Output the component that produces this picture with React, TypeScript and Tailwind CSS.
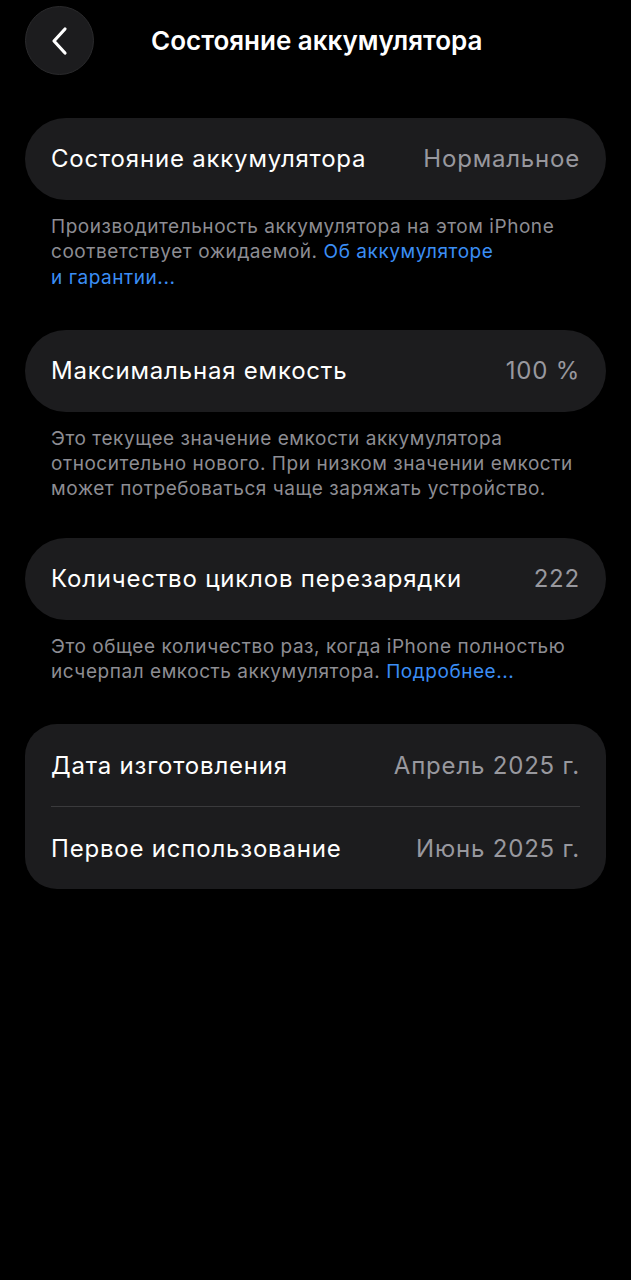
import React from 'react';

const font = { fontFamily: 'Inter, Roboto, "Noto Sans", sans-serif' };

function Row({ label, value }: { label: string; value: string }) {
  return (
    <div className="flex items-center justify-between h-[82px] px-[26px] bg-[#1c1c1e] rounded-full tracking-[0.8px]">
      <span className="text-[24px] text-white">{label}</span>
      <span className="text-[24px] text-[#98989e]">{value}</span>
    </div>
  );
}

function Note({ children }: { children: React.ReactNode }) {
  return (
    <p className="px-[26px] pt-[14px] text-[19px] leading-[25.3px] tracking-[0.55px] text-[#8d8d93]">{children}</p>
  );
}

export default function App() {
  return (
    <div className="min-h-[1280px] w-[631px] bg-black text-white" style={font}>
      <div className="relative flex items-center h-[80px] px-[25px] pt-[1px]">
        <button className="w-[69px] h-[69px] rounded-full bg-[#1c1c1e] border border-[#2a2a2c] flex items-center justify-center">
          <svg width="24" height="32" viewBox="0 0 24 32" fill="none">
            <path d="M17 4 L6 16 L17 28" stroke="white" strokeWidth="3.2" strokeLinecap="round" strokeLinejoin="round" />
          </svg>
        </button>
        <h1 className="ml-[57px] text-[26px] font-semibold">Состояние аккумулятора</h1>
      </div>

      <div className="px-[25px] pt-[38px]">
        <Row label="Состояние аккумулятора" value="Нормальное" />
        <Note>
          Производительность аккумулятора на этом iPhone соответствует ожидаемой.{' '}
          <span className="text-[#3b8ef5]">Об аккумуляторе<br />и гарантии...</span>
        </Note>

        <div className="pt-[40px]">
          <Row label="Максимальная емкость" value="100 %" />
        </div>
        <Note>
          Это текущее значение емкости аккумулятора относительно нового. При низком значении емкости может потребоваться чаще заряжать устройство.
        </Note>

        <div className="pt-[36px]">
          <Row label="Количество циклов перезарядки" value="222" />
        </div>
        <Note>
          Это общее количество раз, когда iPhone полностью исчерпал емкость аккумулятора.{' '}
          <span className="text-[#3b8ef5]">Подробнее...</span>
        </Note>

        <div className="mt-[40px] bg-[#1c1c1e] rounded-[32px] px-[26px] tracking-[0.8px]">
          <div className="flex items-center justify-between h-[83px] pt-[2px] border-b border-[#3a3a3c]">
            <span className="text-[24px] text-white">Дата изготовления</span>
            <span className="text-[24px] text-[#98989e]">Апрель 2025 г.</span>
          </div>
          <div className="flex items-center justify-between h-[82px] pt-[2px]">
            <span className="text-[24px] text-white">Первое использование</span>
            <span className="text-[24px] text-[#98989e]">Июнь 2025 г.</span>
          </div>
        </div>
      </div>
    </div>
  );
}
